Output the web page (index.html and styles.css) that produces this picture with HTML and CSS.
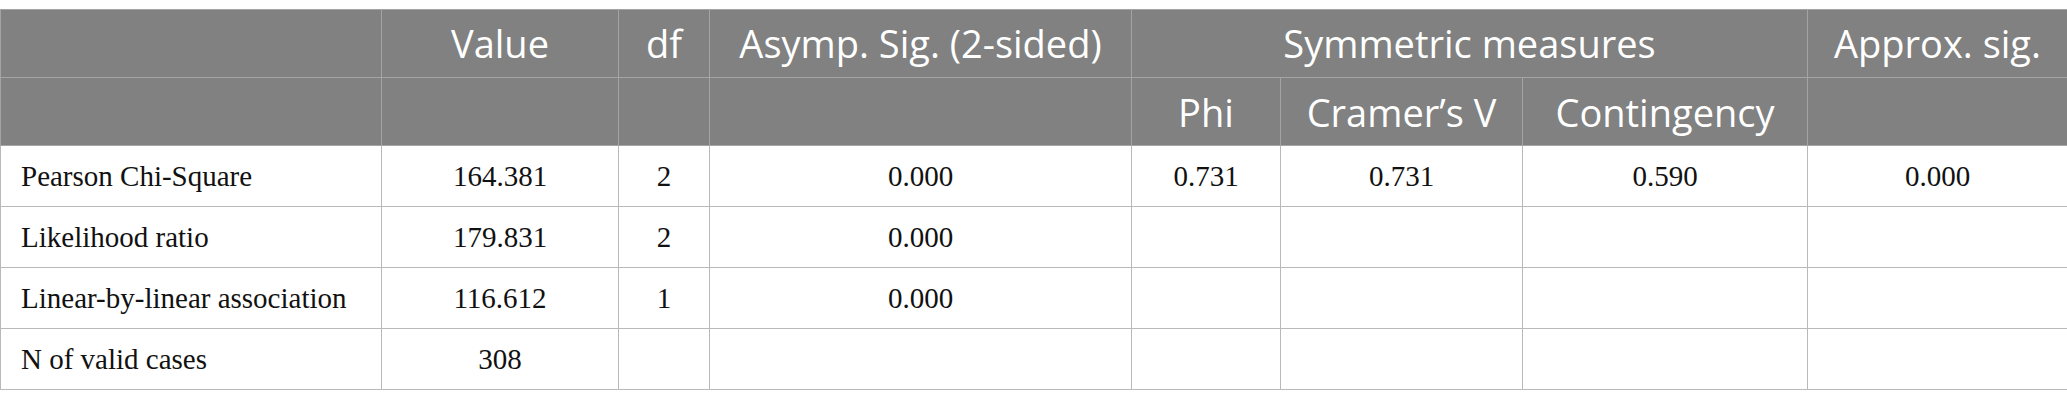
FILE: index.html
```html
<!DOCTYPE html>
<html>
<head>
<meta charset="utf-8">
<link rel="stylesheet" href="styles.css">
</head>
<body>
<table class="stats">
  <colgroup>
    <col class="c1"><col class="c2"><col class="c3"><col class="c4"><col class="c5"><col class="c6"><col class="c7"><col class="c8">
  </colgroup>
  <thead>
    <tr class="h1">
      <th></th>
      <th>Value</th>
      <th>df</th>
      <th>Asymp. Sig. (2-sided)</th>
      <th colspan="3">Symmetric measures</th>
      <th>Approx. sig.</th>
    </tr>
    <tr class="h2">
      <th></th>
      <th></th>
      <th></th>
      <th></th>
      <th>Phi</th>
      <th>Cramer’s V</th>
      <th>Contingency</th>
      <th></th>
    </tr>
  </thead>
  <tbody>
    <tr>
      <td class="label">Pearson Chi-Square</td>
      <td>164.381</td>
      <td>2</td>
      <td>0.000</td>
      <td>0.731</td>
      <td>0.731</td>
      <td>0.590</td>
      <td>0.000</td>
    </tr>
    <tr>
      <td class="label">Likelihood ratio</td>
      <td>179.831</td>
      <td>2</td>
      <td>0.000</td>
      <td></td>
      <td></td>
      <td></td>
      <td></td>
    </tr>
    <tr>
      <td class="label">Linear-by-linear association</td>
      <td>116.612</td>
      <td>1</td>
      <td>0.000</td>
      <td></td>
      <td></td>
      <td></td>
      <td></td>
    </tr>
    <tr>
      <td class="label">N of valid cases</td>
      <td>308</td>
      <td></td>
      <td></td>
      <td></td>
      <td></td>
      <td></td>
      <td></td>
    </tr>
  </tbody>
</table>
</body>
</html>
```

FILE: styles.css
```css
html, body {
  margin: 0;
  padding: 0;
  background: #ffffff;
}
body {
  padding-top: 9px;
}
.stats {
  width: 2067px;
  border-collapse: collapse;
  table-layout: fixed;
}
.c1 { width: 381px; }
.c2 { width: 237px; }
.c3 { width: 91px; }
.c4 { width: 422px; }
.c5 { width: 149px; }
.c6 { width: 242px; }
.c7 { width: 285px; }
.c8 { width: 260px; }

.stats th, .stats td {
  border: 1px solid #b9b9b9;
  padding: 0 8px;
  text-align: center;
  vertical-align: middle;
  white-space: nowrap;
}
.stats th {
  background: #808180;
  color: #ffffff;
  font-family: "Open Sans", "Noto Sans", sans-serif;
  font-weight: 400;
  font-size: 38px;
  border-color: #a3a4a3;
}
.stats .h1 th { padding-bottom: 2px; }
.stats .h1 { height: 68px; }
.stats .h2 { height: 68px; }
.stats tbody tr { height: 61px; }
.stats td {
  font-family: "Liberation Serif", "Times New Roman", serif;
  font-size: 29px;
  color: #111111;
}
.stats td.label {
  text-align: left;
  padding-left: 20px;
}
```
